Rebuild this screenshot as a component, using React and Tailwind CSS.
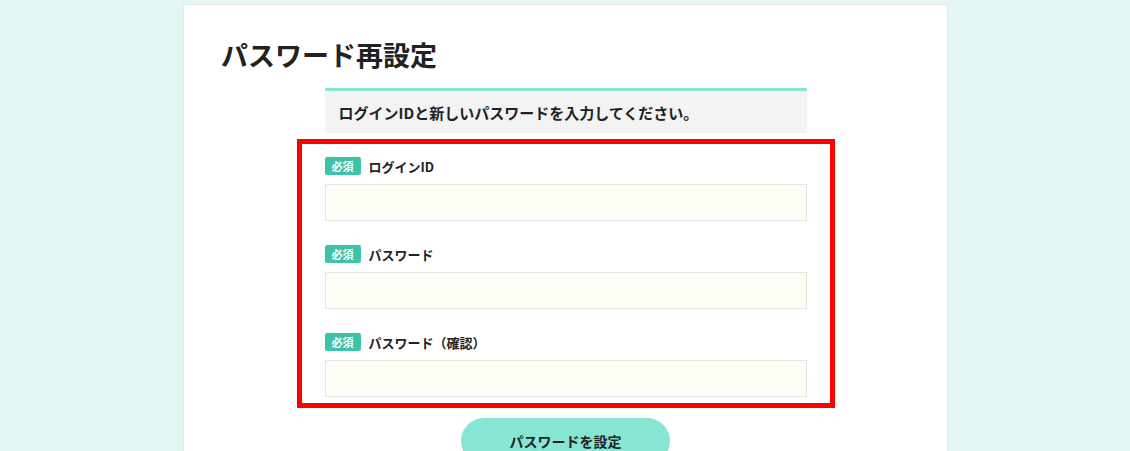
import React from "react";

const FONT = { fontFamily: '"Noto Sans CJK JP", "Noto Sans", sans-serif' };

const fields = [
  { id: "loginId", label: "ログインID", type: "text" },
  { id: "password", label: "パスワード", type: "password" },
  { id: "passwordConfirm", label: "パスワード（確認）", type: "password" },
];

const Field = ({ field, first }) => (
  <div className={first ? "" : "mt-[24px]"}>
    <div className="flex items-center h-[18px]">
      <span className="flex items-center justify-center w-[36px] h-[18px] rounded-[2px] bg-[#3cc3aa] text-white text-[11px] font-bold leading-none">
        必須
      </span>
      <label
        htmlFor={field.id}
        className="ml-[8px] text-[13px] font-bold text-[#222] leading-none"
      >
        {field.label}
      </label>
    </div>
    <input
      id={field.id}
      type={field.type}
      className="mt-[9px] block w-full h-[37px] bg-[#fcfdf5] border border-[#e4e4e4] outline-none px-3 text-[14px]"
    />
  </div>
);

export default function App() {
  return (
    <div className="min-h-screen bg-[#e2f6f4] pt-[4px]" style={FONT}>
      <div className="w-[765px] ml-[183px] bg-white border border-[#e2e8e7] min-h-[460px] pt-[36px] px-[37px]">
        <h1 className="text-[27px] font-bold leading-none text-[#222]">
          パスワード再設定
        </h1>

        <div className="w-[482px] mx-auto mt-[20px]">
          <div className="border-t-[3px] border-[#86e5d3] bg-[#f3f3f3] h-[45px] flex items-center px-[14px]">
            <p className="text-[15px] font-bold text-[#222] leading-none">
              ログインIDと新しいパスワードを入力してください。
            </p>
          </div>
        </div>

        {/* annotated form area */}
        <div className="w-[538px] mx-auto mt-[6px] border-[5px] border-[#ff0000] pt-[13px] pb-[6px] px-[23px]">
          {fields.map((f, i) => (
            <Field key={f.id} field={f} first={i === 0} />
          ))}
        </div>

        <div className="flex justify-center mt-[10px]">
          <button className="w-[209px] h-[46px] rounded-full bg-[#86e5d3] text-[14px] font-bold text-[#222]">
            パスワードを設定
          </button>
        </div>
      </div>
    </div>
  );
}
